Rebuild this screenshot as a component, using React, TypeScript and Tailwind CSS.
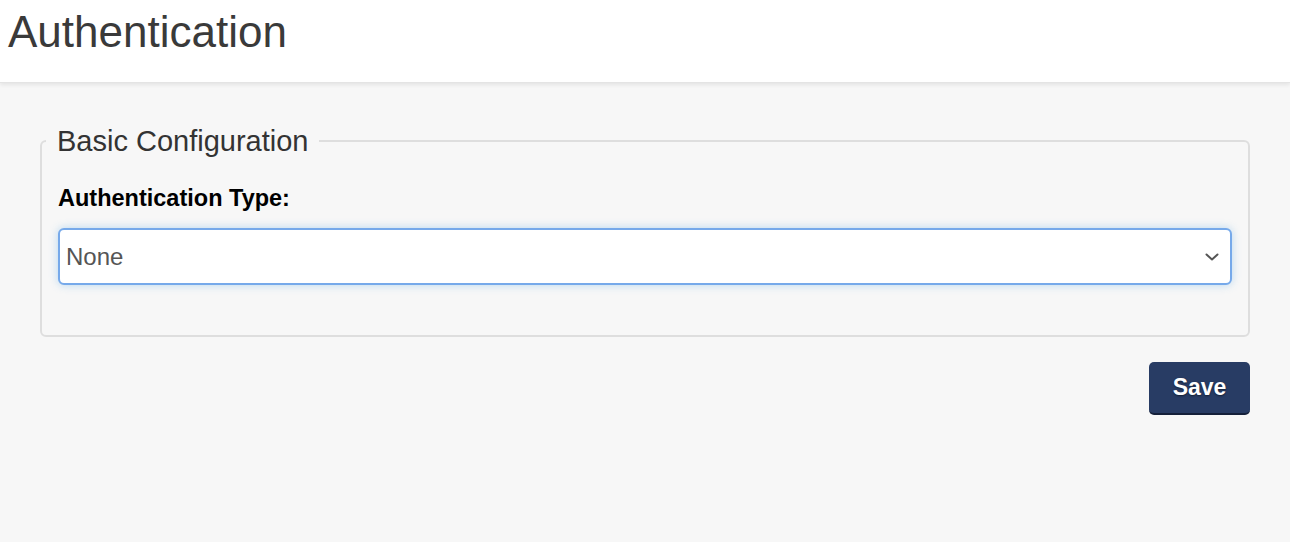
import { useState } from "react";

const font = { fontFamily: '"Liberation Sans", Arial, sans-serif' };

const App = () => {
  const [authType, setAuthType] = useState("none");

  return (
    <div className="min-h-[542px] bg-[#f7f7f7]" style={font}>
      <header className="h-[83px] bg-white shadow-[0_2px_4px_rgba(0,0,0,0.08)] border-b border-[#e4e4e4] pl-[8px] pt-[6px]">
        <h1 className="text-[44px] leading-[52px] text-[#3a3a3a] font-normal">Authentication</h1>
      </header>

      <div className="px-[40px] pt-[42px]">
        <fieldset className="border-2 border-[#dedede] rounded-md px-[16px] pb-[50px] pt-[28px] min-w-0">
          <legend className="px-[11px] -ml-[12px] text-[29px] leading-[32px] text-[#333333]">
            Basic Configuration
          </legend>
          <label htmlFor="authType" className="block text-[23.5px] leading-[26px] font-bold text-black mb-[17px]">
            Authentication Type:
          </label>
          <div className="relative">
            <select
              id="authType"
              value={authType}
              onChange={(e) => setAuthType(e.target.value)}
              className="appearance-none w-full h-[57px] bg-white border-2 border-[#76a9ea] rounded-md pl-[6px] pr-10 text-[24px] text-[#555555] outline-none shadow-[0_0_8px_rgba(102,175,233,0.45)]"
              style={font}
            >
              <option value="none">None</option>
              <option value="basic">Basic</option>
              <option value="ldap">LDAP</option>
            </select>
            <svg
              className="absolute right-[13px] top-[24px] pointer-events-none"
              width="14"
              height="10"
              viewBox="0 0 14 10"
              fill="none"
            >
              <path d="M1.5 2.5 L7 7.5 L12.5 2.5" stroke="#555555" strokeWidth="2" strokeLinecap="round" strokeLinejoin="round" />
            </svg>
          </div>
        </fieldset>

        <div className="flex justify-end mt-[25px]">
          <button className="h-[53px] w-[101px] rounded-[5px] bg-[#283c64] border-b-2 border-[#15203a] text-white text-[23px] font-bold [text-shadow:0_1px_2px_rgba(0,0,0,0.5)]">
            Save
          </button>
        </div>
      </div>
    </div>
  );
};

export default App;
